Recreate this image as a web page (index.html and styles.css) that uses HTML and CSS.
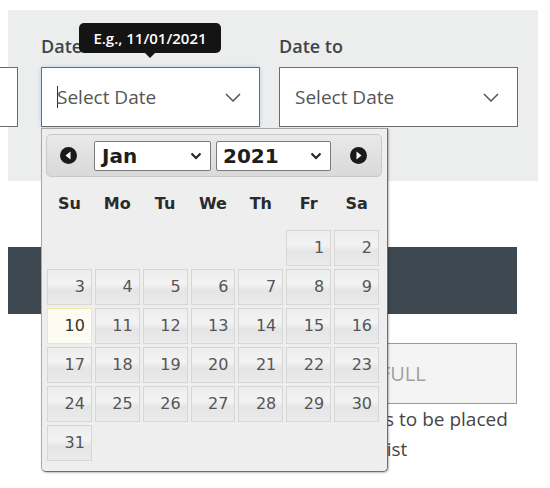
FILE: index.html
```html
<!DOCTYPE html>
<html lang="en">
<head>
<meta charset="utf-8">
<title>Date filter</title>
<link rel="stylesheet" href="styles.css">
</head>
<body>
<div class="panel">
  <div class="field field-prev">
    <div class="label">&nbsp;</div>
    <div class="input"></div>
  </div>
  <div class="field field-from">
    <div class="label">Date from</div>
    <div class="input focused">
      <span class="caret"></span>
      <span class="placeholder">Select Date</span>
      <svg class="chev" width="16" height="9" viewBox="0 0 16 9"><path d="M1 1 L8 8 L15 1" fill="none" stroke="#555" stroke-width="1.5"/></svg>
    </div>
    <div class="tooltip">E.g., 11/01/2021</div>
    <div class="datepicker">
      <div class="dp-header">
        <span class="nav nav-prev"><svg width="17" height="17" viewBox="0 0 17 17"><circle cx="8.5" cy="8.5" r="8.5" fill="#1a1a1a"/><path d="M10.5 4.5 L5.5 8.5 L10.5 12.5 Z" fill="#fff"/></svg></span>
        <span class="dp-select month">Jan<svg class="schev" width="12" height="8" viewBox="0 0 12 8"><path d="M1.5 1.5 L6 6 L10.5 1.5" fill="none" stroke="#222" stroke-width="2"/></svg></span>
        <span class="dp-select year">2021<svg class="schev" width="12" height="8" viewBox="0 0 12 8"><path d="M1.5 1.5 L6 6 L10.5 1.5" fill="none" stroke="#222" stroke-width="2"/></svg></span>
        <span class="nav nav-next"><svg width="17" height="17" viewBox="0 0 17 17"><circle cx="8.5" cy="8.5" r="8.5" fill="#1a1a1a"/><path d="M6.5 4.5 L11.5 8.5 L6.5 12.5 Z" fill="#fff"/></svg></span>
      </div>
      <div class="dp-names">
        <span>Su</span><span>Mo</span><span>Tu</span><span>We</span><span>Th</span><span>Fr</span><span>Sa</span>
      </div>
      <div class="dp-days">
        <span class="empty"></span><span class="empty"></span><span class="empty"></span><span class="empty"></span><span class="empty"></span>
        <span class="day">1</span><span class="day">2</span>
        <span class="day">3</span><span class="day">4</span><span class="day">5</span><span class="day">6</span><span class="day">7</span><span class="day">8</span><span class="day">9</span>
        <span class="day today">10</span><span class="day">11</span><span class="day">12</span><span class="day">13</span><span class="day">14</span><span class="day">15</span><span class="day">16</span>
        <span class="day">17</span><span class="day">18</span><span class="day">19</span><span class="day">20</span><span class="day">21</span><span class="day">22</span><span class="day">23</span>
        <span class="day">24</span><span class="day">25</span><span class="day">26</span><span class="day">27</span><span class="day">28</span><span class="day">29</span><span class="day">30</span>
        <span class="day">31</span>
      </div>
    </div>
  </div>
  <div class="field field-to">
    <div class="label">Date to</div>
    <div class="input">
      <span class="placeholder">Select Date</span>
      <svg class="chev" width="16" height="9" viewBox="0 0 16 9"><path d="M1 1 L8 8 L15 1" fill="none" stroke="#555" stroke-width="1.5"/></svg>
    </div>
  </div>
</div>

<div class="bar"></div>

<div class="status">
  <div class="status-col">
    <div class="full-box">WAITLIST FULL</div>
    <p class="note">Submissions to be placed<br>on the waitlist</p>
  </div>
</div>
</body>
</html>
```

FILE: styles.css
```css
html {
  overflow: hidden;
}

body {
  margin: 0;
  padding: 0;
  min-height: 488px;
  background: #ffffff;
  font-family: "Open Sans", "Liberation Sans", sans-serif;
}

.panel {
  margin: 10px 0 0 8px;
  width: 530px;
  box-sizing: border-box;
  background: #eceeee;
  padding: 24px 0 54px 0;
  display: flex;
}

.field {
  position: relative;
  flex: none;
}

.field-prev {
  width: 200px;
  margin-left: -190px;
  margin-right: 23px;
}

.field-from {
  width: 219px;
  margin-right: 19px;
}

.field-to {
  width: 239px;
}

.label {
  height: 24px;
  line-height: 24px;
  font-size: 18px;
  font-weight: 600;
  color: #40444a;
  margin-bottom: 9px;
  white-space: nowrap;
}

.input {
  height: 60px;
  box-sizing: border-box;
  border: 1px solid #6b6b6b;
  background: #ffffff;
  display: flex;
  align-items: center;
  padding: 0 18px 0 15px;
}

.input.focused {
  box-shadow: 0 0 4px rgba(90, 140, 200, 0.35);
}

.caret {
  width: 1px;
  height: 22px;
  background: #333;
  margin-right: -1px;
}

.placeholder {
  flex: 1;
  font-size: 19px;
  color: #555;
}

.chev {
  display: block;
}

.tooltip {
  position: absolute;
  left: 38px;
  top: -11px;
  width: 142px;
  height: 30px;
  line-height: 30px;
  background: #141414;
  color: #fff;
  font-size: 15px;
  font-weight: 600;
  text-align: center;
  border-radius: 5px;
  white-space: nowrap;
}

.tooltip::after {
  content: "";
  position: absolute;
  left: 65px;
  top: 29px;
  border-left: 6px solid transparent;
  border-right: 6px solid transparent;
  border-top: 6px solid #141414;
}

.datepicker {
  position: absolute;
  left: 0;
  top: 94px;
  width: 347px;
  height: 344px;
  box-sizing: border-box;
  border: 1px solid #a9a9a9;
  border-right-color: #6e6e6e;
  border-bottom-color: #6e6e6e;
  border-radius: 0 0 5px 5px;
  background: #eeeeee;
  padding: 5px 5px 0 4px;
  box-shadow: 1px 1px 2px rgba(0, 0, 0, 0.25);
  font-family: "DejaVu Sans", Verdana, sans-serif;
  z-index: 2;
}

.dp-header {
  height: 43px;
  box-sizing: border-box;
  border: 1px solid #c8c8c8;
  border-radius: 5px;
  background: linear-gradient(#e9e9e9, #d9d9d9);
  display: flex;
  align-items: center;
  padding-left: 13px;
}

.nav svg {
  display: block;
}

.nav-prev {
  margin-right: 17px;
}

.nav-next {
  margin-left: 19px;
}

.dp-select {
  height: 30px;
  box-sizing: border-box;
  border: 1px solid #7a7a7a;
  border-radius: 2px;
  background: #fff;
  display: flex;
  align-items: center;
  justify-content: space-between;
  font-size: 20px;
  font-weight: bold;
  color: #1e1e1e;
}

.dp-select.month {
  width: 117px;
  padding: 0 8px 0 7px;
  margin-right: 5px;
}

.dp-select.year {
  width: 115px;
  padding: 0 8px 0 6px;
}

.schev {
  display: block;
}

.dp-names {
  margin-left: 1px;
  width: 332px;
  height: 53px;
  display: grid;
  grid-template-columns: repeat(7, 1fr);
  column-gap: 3px;
  align-items: center;
  text-align: center;
  font-size: 16px;
  font-weight: bold;
  color: #2a2a2a;
}

.dp-days {
  margin-left: 1px;
  width: 332px;
  display: grid;
  grid-template-columns: repeat(7, 1fr);
  grid-auto-rows: 36px;
  gap: 3px;
}

.day {
  box-sizing: border-box;
  border: 1px solid #d6d6d6;
  background: linear-gradient(#ededed 0%, #f3f3f3 40%, #e5e5e5 60%, #ebebeb 100%);
  color: #555;
  font-size: 16px;
  text-align: right;
  padding-right: 6px;
  line-height: 34px;
}

.day.today {
  border-color: #f5e8a6;
  background: #fdfcf3;
  color: #333;
}

.bar {
  margin: 66px 0 0 8px;
  width: 509px;
  height: 67px;
  background: #3e4850;
}

.status {
  margin-top: 29px;
  padding-left: 279px;
}

.status-col {
  width: 238px;
}

.full-box {
  height: 61px;
  box-sizing: border-box;
  border: 1px solid #9a9a9a;
  background: #f4f4f4;
  color: #a0a0a0;
  font-size: 20px;
  line-height: 59px;
  padding-left: 9px;
  white-space: nowrap;
}

.note {
  margin: 0;
  padding-left: 4px;
  font-size: 19px;
  line-height: 30px;
  color: #454545;
  white-space: nowrap;
}
```
